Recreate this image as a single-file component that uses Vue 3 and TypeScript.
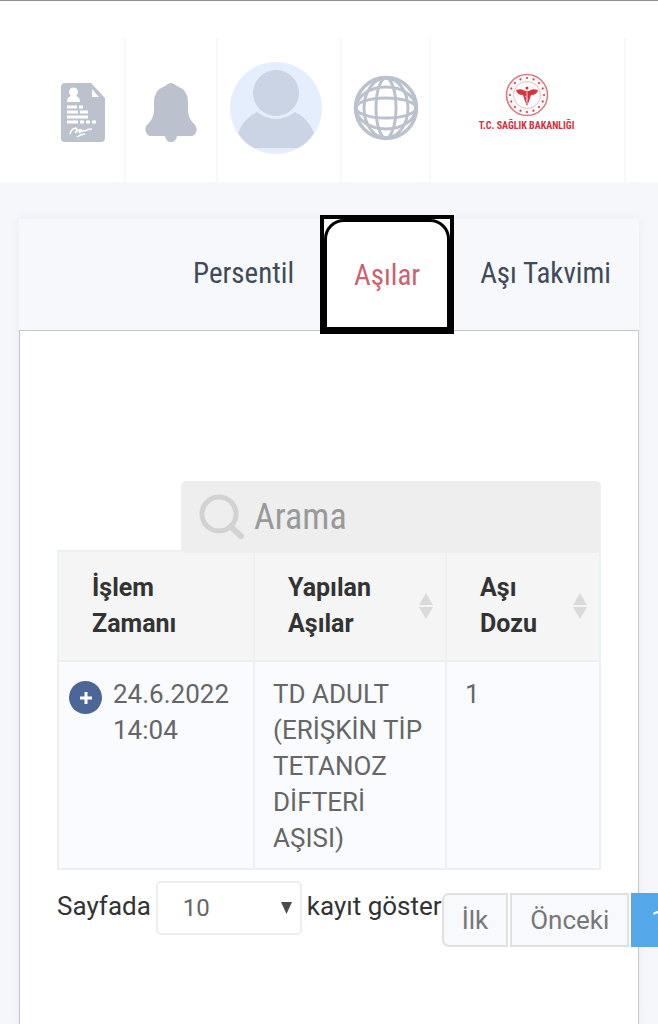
<script setup lang="ts">
import { ref } from 'vue'

interface Vaccine {
  date: string
  name: string
  dose: number
}

const tabs: string[] = ['Persentil', 'Aşılar', 'Aşı Takvimi']
const activeTab = ref('Aşılar')
const search = ref('')
const pageSize = ref(10)
const rows: Vaccine[] = [
  { date: '24.6.2022 14:04', name: 'TD ADULT (ERİŞKİN TİP TETANOZ DİFTERİ AŞISI)', dose: 1 },
]
const sealAngles: number[] = Array.from({ length: 16 }, (_, i) => i * 22.5)
</script>

<template>
  <div class="page">
    <header class="topbar">
      <button class="cell cell-doc" type="button" aria-label="Belgeler">
        <svg width="44" height="59" viewBox="0 0 44 59">
          <path d="M4 0H30L44 15V55Q44 59 40 59H4Q0 59 0 55V4Q0 0 4 0Z" fill="#bbc1cd" />
          <path d="M31 6V14H38Z" fill="#fff" />
          <circle cx="12.500" cy="9" r="4.500" fill="#fff" />
          <path d="M6 19Q6 14 10 13H15Q19 14 19 19Z" fill="#fff" />
          <g stroke="#fff" stroke-width="3">
            <path d="M6 24H16M18 24H22M6 29H17M19 29H27M6 34H27M6 39H17M19 39H23M25 39H29M31 39H35" />
          </g>
          <path d="M9 51Q10 46 15 45Q17 47 14 50Q18 46 20 47L18 50Q22 47 24 48Q27 46 31 46M16 54Q20 51 24 51" fill="none" stroke="#fff" stroke-width="1.500" />
        </svg>
      </button>
      <button class="cell cell-bell" type="button" aria-label="Bildirimler">
        <svg width="52" height="59" viewBox="0 0 52 59">
          <path d="M20 3Q26-3 32 3Q43 7 43 19V27Q43 35 49 41Q53 44 51 49Q50 53 46 53H32Q31 59 26 59Q21 59 20 53H6Q2 53 1 49Q-1 44 3 41Q9 35 9 27V19Q9 7 20 3Z" fill="#bbc1cd" />
        </svg>
      </button>
      <button class="cell cell-user" type="button" aria-label="Profil">
        <svg width="92" height="92" viewBox="0 0 92 92">
          <circle cx="46" cy="46" r="46" fill="#e5eefc" />
          <circle cx="46" cy="31" r="23" fill="#cad4e4" />
          <path d="M27 50Q46 64 65 50Q78 56 84 71Q78 81 68 86H24Q14 81 8 71Q14 56 27 50Z" fill="#cad4e4" />
        </svg>
      </button>
      <button class="cell cell-globe" type="button" aria-label="Dil">
        <svg width="66" height="66" viewBox="0 0 66 66" fill="none" stroke="#bbc1cd" stroke-width="3">
          <circle cx="33" cy="33" r="30.500" stroke-width="3.500" />
          <ellipse cx="33" cy="33" rx="22" ry="30" />
          <ellipse cx="33" cy="33" rx="10" ry="30" />
          <ellipse cx="33" cy="33" rx="30" ry="21" />
          <ellipse cx="33" cy="33" rx="30" ry="10" />
        </svg>
      </button>
      <a class="cell cell-logo" href="#">
        <svg width="44" height="44" viewBox="0 0 44 44">
          <circle cx="22" cy="22" r="20.500" fill="#fffafa" stroke="#dc7880" stroke-width="1.500" />
          <circle cx="22" cy="22" r="13.500" fill="#fff" stroke="#f0bcc0" stroke-width="1" />
          <circle v-for="a in sealAngles" :key="a" cx="22" cy="5" r="1.100" fill="#c94b56" :transform="`rotate(${a} 22 22)`" />
          <path d="M11 17Q17 15 20 18H24Q27 15 33 17Q32 22 26 22Q24 29 22 33Q20 29 18 22Q12 22 11 17Z" fill="#d9333f" />
          <circle cx="22" cy="15" r="1.500" fill="#d9333f" />
          <path d="M22 17V31M20 23Q24 25 21 28" fill="none" stroke="#f6c4c8" stroke-width="1" />
        </svg>
        <span class="logo-text">T.C. SAĞLIK BAKANLIĞI</span>
      </a>
    </header>

    <main class="card">
      <nav class="tabs" role="tablist">
        <button
          v-for="tab in tabs"
          :key="tab"
          type="button"
          role="tab"
          class="tab"
          :class="{ active: tab === activeTab }"
          :aria-selected="tab === activeTab"
          @click="activeTab = tab"
        >
          <span class="tab-face">{{ tab }}</span>
        </button>
      </nav>

      <section class="panel">
        <label class="search">
          <svg width="46" height="46" viewBox="0 0 46 46" fill="none" stroke="#d2d2d2">
            <circle cx="20" cy="20" r="17" stroke-width="5" />
            <path d="M32 33L42 42" stroke-width="6" stroke-linecap="round" />
          </svg>
          <input v-model="search" type="text" placeholder="Arama" aria-label="Arama" />
        </label>

        <table class="grid">
          <colgroup>
            <col class="col-date" />
            <col class="col-name" />
            <col class="col-dose" />
          </colgroup>
          <thead>
            <tr>
              <th scope="col">İşlem Zamanı</th>
              <th scope="col">
                <div class="head">
                  <span>Yapılan Aşılar</span>
                  <svg class="sort" width="14" height="26" viewBox="0 0 14 26"><path d="M7 0L14 12H0ZM0 14H14L7 26Z" fill="#dadada" /></svg>
                </div>
              </th>
              <th scope="col">
                <div class="head">
                  <span>Aşı Dozu</span>
                  <svg class="sort" width="14" height="26" viewBox="0 0 14 26"><path d="M7 0L14 12H0ZM0 14H14L7 26Z" fill="#dadada" /></svg>
                </div>
              </th>
            </tr>
          </thead>
          <tbody>
            <tr v-for="row in rows" :key="row.date">
              <td class="date">
                <div class="date-box">
                  <button class="expand" type="button" aria-label="Detay">
                    <svg width="14" height="14" viewBox="0 0 14 14"><path d="M7 1V13M1 7H13" stroke="#fff" stroke-width="3" /></svg>
                  </button>
                  <span>{{ row.date }}</span>
                </div>
              </td>
              <td>{{ row.name }}</td>
              <td>{{ row.dose }}</td>
            </tr>
          </tbody>
        </table>

        <div class="footer">
          <div class="length">
            <label for="page-size">Sayfada</label>
            <span class="select-box">
              <select id="page-size" v-model="pageSize">
                <option :value="10">10</option>
                <option :value="25">25</option>
                <option :value="50">50</option>
              </select>
              <svg class="arrow" width="11" height="12" viewBox="0 0 11 12"><path d="M0 0H11L5.500 12Z" fill="#4c4c4c" /></svg>
            </span>
            <span>kayıt göster</span>
          </div>
          <nav class="pager" aria-label="Sayfalama">
            <button class="first" type="button">İlk</button>
            <button type="button">Önceki</button>
            <button class="current" type="button">1</button>
          </nav>
        </div>
      </section>
    </main>
  </div>
</template>

<style>
body {
  background: #f5f7fb;
}
</style>

<style scoped>
.page,
.page * {
  box-sizing: border-box;
}
.page {
  min-height: 100vh;
  display: flex;
  flex-direction: column;
  overflow: hidden;
  border-top: 1px solid #8f8f96;
  background: #f5f7fb;
  font-family: Roboto, "Liberation Sans", sans-serif;
  font-size: 26px;
  line-height: 36px;
  color: #333;
}
button,
input,
select {
  font: inherit;
  color: inherit;
  border: 0;
  margin: 0;
  padding: 0;
  background: none;
}
.topbar {
  display: flex;
  padding-top: 37px;
  height: 182px;
  background: #fff;
  border-bottom: 1px solid #f7f9fb;
}
.cell {
  display: flex;
  flex-direction: column;
  align-items: center;
  justify-content: center;
  border-right: 2px solid #f7f8f9;
}
.cell-doc {
  width: 126px;
  padding: 4px 0 0 42px;
}
.cell-bell {
  width: 92px;
  padding-top: 4px;
}
.cell-user {
  width: 124px;
  padding: 0 6px 4px 0;
}
.cell-globe {
  width: 89px;
  padding-bottom: 4px;
}
.cell-logo {
  width: 195px;
  padding: 0 2px 14px 0;
  color: #d6303c;
  text-decoration: none;
}
.logo-text {
  margin-top: 2px;
  font-family: "Roboto Condensed", Roboto, sans-serif;
  font-size: 10px;
  font-weight: 700;
  line-height: 14px;
  white-space: nowrap;
}
.card {
  flex: 1;
  display: flex;
  flex-direction: column;
  margin: 36px 19px 0;
  box-shadow: 0 0 10px rgba(70, 80, 110, 0.07);
}
.tabs {
  display: flex;
  justify-content: flex-end;
  height: 111px;
  padding-right: 2px;
  background: #f6f8fc;
}
.tab {
  display: flex;
  padding: 0 26px 4px;
  font-family: "Roboto Condensed", "Liberation Sans Narrow", Roboto, sans-serif;
  font-size: 29px;
  color: #414b58;
}
.tab-face {
  align-self: center;
}
.tab.active {
  width: 134px;
  height: 119px;
  margin-top: -4px;
  padding: 0;
  position: relative;
  border: 4px solid #000;
  background: #fff;
  color: #c96470;
}
.tab.active .tab-face {
  flex: 1;
  align-self: stretch;
  display: flex;
  align-items: center;
  justify-content: center;
  border: 3px solid #000;
  border-radius: 20px 20px 0 0;
}
.panel {
  flex: 1;
  padding: 150px 37px 75px;
  border: 1px solid #c4c6ca;
  border-bottom: 0;
  background: #fff;
}
.search {
  position: relative;
  display: flex;
  align-items: center;
  gap: 9px;
  width: 420px;
  max-width: 100%;
  height: 72px;
  margin-left: auto;
  margin-bottom: -3px;
  padding: 0 18px;
  border-radius: 5px;
  background: #eee;
}
.search input {
  flex: 1;
  min-width: 0;
  outline: 0;
  font-family: "Roboto Condensed", "Liberation Sans Narrow", Roboto, sans-serif;
  font-size: 36px;
  line-height: 48px;
  color: #555;
}
.search input::placeholder {
  color: #999;
  opacity: 1;
}
.grid {
  width: 100%;
  table-layout: fixed;
  border-collapse: collapse;
}
.col-date {
  width: 196px;
}
.col-name {
  width: 192px;
}
.col-dose {
  width: auto;
}
th,
td {
  border: 2px solid #ebf0f1;
  text-align: left;
}
th {
  height: 110px;
  padding: 0 12px 0 33px;
  background: #f5f5f5;
  font-size: 25px;
  font-weight: 700;
}
th:first-child {
  padding-right: 60px;
}
.head {
  display: flex;
  align-items: center;
  justify-content: space-between;
}
.sort {
  flex: none;
}
td {
  padding: 14px 18px 12px;
  background: #fafbfe;
  color: #666;
  vertical-align: top;
}
td.date {
  padding: 14px 10px 12px;
}
.date-box {
  display: flex;
  align-items: flex-start;
  gap: 11px;
}
.expand {
  flex: none;
  display: flex;
  align-items: center;
  justify-content: center;
  width: 33px;
  height: 33px;
  margin-top: 5px;
  border-radius: 50%;
  background: #4b6697;
}
.footer {
  display: flex;
  margin-top: 11px;
  white-space: nowrap;
}
.length {
  flex: none;
  display: flex;
  align-items: center;
  gap: 5px;
  height: 54px;
}
.length label,
.length > span:last-child {
  padding-bottom: 4px;
}
.select-box {
  position: relative;
  display: flex;
}
select {
  appearance: none;
  width: 146px;
  height: 54px;
  padding-left: 25px;
  border: 2px solid #eee;
  border-radius: 5px;
  background: #fff;
  font-size: 24px;
  color: #666;
}
.arrow {
  position: absolute;
  right: 10px;
  top: 21px;
  pointer-events: none;
}
.pager {
  flex: none;
  display: flex;
  gap: 2px;
  margin-top: 12px;
}
.pager button {
  height: 54px;
  padding: 0 18px;
  border: 2px solid #dfe1e2;
  background: #f8f9fc;
  color: #777;
}
.pager .first {
  border-radius: 7px 0 0 7px;
}
.pager .current {
  border-color: #54a8ea;
  background: #54a8ea;
  color: #fff;
}
</style>
